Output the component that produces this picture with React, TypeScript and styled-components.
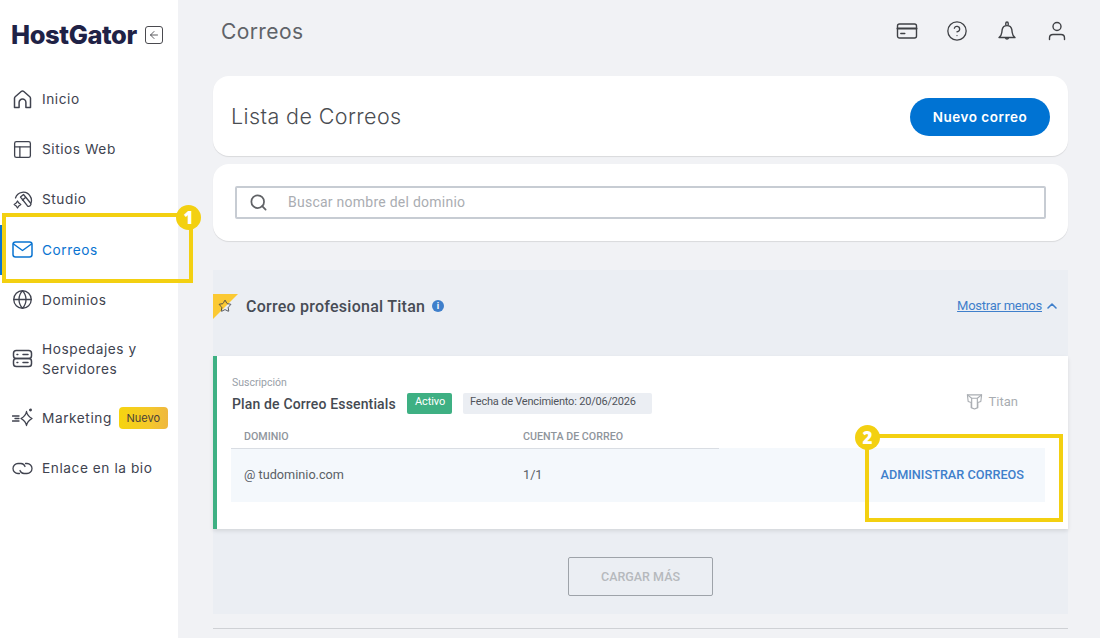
import React from 'react';
import styled, { createGlobalStyle } from 'styled-components';
import { ArrowLeft, ChevronUp, CircleHelp, Globe, PanelsTopLeft, Search, Star } from 'lucide-react';

const GlobalStyle = createGlobalStyle`
  html, body {
    margin: 0;
    padding: 0;
    background: #f1f2f5;
  }
  * {
    box-sizing: border-box;
  }
`;

const Page = styled.div`
  position: relative;
  display: flex;
  width: 1100px;
  height: 638px;
  overflow: hidden;
  background: #f1f2f5;
  font-family: Roboto, "Liberation Sans", sans-serif;
`;

const Sidebar = styled.aside`
  flex: 0 0 178px;
  background: #fff;
  padding: 21px 0 0;
`;

const LogoRow = styled.div`
  display: flex;
  align-items: center;
  height: 26px;
  padding-left: 11px;
  margin-bottom: 27px;
`;

const Logo = styled.span`
  font-family: Inter, sans-serif;
  font-size: 25.5px;
  font-weight: 800;
  letter-spacing: -0.4px;
  color: #1f2246;
`;

const CollapseBox = styled.span`
  display: flex;
  align-items: center;
  justify-content: center;
  width: 18px;
  height: 18px;
  margin: 1px 0 0 8px;
  border: 1.3px solid #4a4a4f;
  border-radius: 3px;
  color: #4a4a4f;
`;

const NavList = styled.nav`
  display: flex;
  flex-direction: column;
`;

const NavItem = styled.a<{ $active?: boolean; $h?: number }>`
  display: flex;
  align-items: center;
  gap: 9px;
  height: ${({ $h }) => $h ?? 50.2}px;
  padding-left: 12px;
  font-family: Inter, sans-serif;
  font-size: 13.7px;
  line-height: 20px;
  letter-spacing: 0.55px;
  color: ${({ $active }) => ($active ? '#0a74d1' : '#40434f')};
  box-shadow: ${({ $active }) => ($active ? 'inset 2px 0 0 #0a74d1' : 'none')};

  svg {
    flex: 0 0 21px;
    width: 21px;
    height: 21px;
  }
`;

const NewTag = styled.span`
  flex: 0 0 49px;
  height: 22px;
  margin-left: -2px;
  border-radius: 4px;
  background: linear-gradient(90deg, #f6d40f 0%, #f4c92a 60%, #efb73f 100%);
  font-size: 11px;
  line-height: 22px;
  letter-spacing: 0;
  text-align: center;
  color: #4a4038;
`;

const Main = styled.main`
  flex: 1;
  padding: 0 32px 0 35px;
`;

const TopBar = styled.header`
  display: flex;
  align-items: center;
  justify-content: space-between;
  height: 76px;
  padding: 0 0 14px 8px;
`;

const PageTitle = styled.h1`
  margin: 0;
  font-family: Inter, sans-serif;
  font-size: 21px;
  font-weight: 400;
  letter-spacing: 0.4px;
  color: #5f6368;
`;

const TopIcons = styled.div`
  display: flex;
  gap: 28px;
  color: #3f4145;

  svg {
    width: 22px;
    height: 22px;
    display: block;
  }
`;

const Card = styled.section<{ $h: number }>`
  display: flex;
  align-items: center;
  justify-content: space-between;
  height: ${({ $h }) => $h}px;
  margin-bottom: 8px;
  padding: 0 18px 0 18px;
  background: #fff;
  border-radius: 16px;
  box-shadow: 0 1px 1px rgba(0, 0, 0, 0.1);
`;

const CardTitle = styled.h2`
  margin: 0;
  font-family: Inter, sans-serif;
  font-size: 21.5px;
  font-weight: 300;
  letter-spacing: 0.4px;
  color: #4a4d52;
`;

const PrimaryButton = styled.button`
  width: 140px;
  height: 38px;
  margin-top: 2px;
  border: 0;
  border-radius: 19px;
  background: #0073d3;
  color: #fff;
  font-family: Inter, sans-serif;
  font-size: 13.5px;
  font-weight: 600;
  letter-spacing: 0.5px;
`;

const SearchBox = styled.label`
  display: flex;
  align-items: center;
  width: 811px;
  height: 33px;
  margin: 0 4px;
  padding: 0 0 1px 12px;
  border: 2px solid #c7ccd3;
  border-radius: 2px;
  color: #606266;
  font-size: 14px;
  letter-spacing: 0.25px;
  cursor: text;

  svg {
    width: 19px;
    height: 19px;
    margin-right: 20px;
  }
`;

const Placeholder = styled.span`
  color: #aaadb2;
`;

const Panel = styled.section`
  height: 344px;
  margin-top: 29px;
  background: #ebeef3;
`;

const PanelHead = styled.div`
  position: relative;
  display: flex;
  align-items: flex-start;
  justify-content: space-between;
  height: 86px;
  padding: 28px 8px 0 33px;
`;

const Ribbon = styled.span`
  position: absolute;
  top: 24px;
  left: 0;
  width: 25px;
  height: 25px;
  background: #fbc933;
  clip-path: polygon(0 0, 100% 0, 0 100%);
`;

const RibbonStar = styled.span`
  position: absolute;
  top: 29px;
  left: 5px;
  color: #3d4047;
  line-height: 0;
`;

const PanelTitle = styled.div`
  display: flex;
  align-items: center;
  gap: 7px;
  font-size: 16px;
  font-weight: 500;
  letter-spacing: 0.25px;
  line-height: 18px;
  color: #474c55;
`;

const InfoDot = styled.span`
  display: flex;
  align-items: center;
  justify-content: center;
  width: 12px;
  height: 12px;
  margin-top: -3px;
  border-radius: 50%;
  background: #3f7fcb;
  color: #fff;
  font-size: 9px;
  font-weight: 700;
`;

const ToggleLink = styled.a`
  display: flex;
  align-items: center;
  gap: 2px;
  font-size: 13px;
  letter-spacing: -0.25px;
  color: #3f7fcb;
  line-height: 16px;

  span {
    text-decoration: underline;
  }
`;

const SubCard = styled.article`
  height: 173px;
  padding: 20px 23px 0 15px;
  background: #fff;
  border-left: 4px solid #3eb083;
  box-shadow: 0 2px 4px rgba(0, 0, 0, 0.1);
`;

const SubLabel = styled.div`
  font-size: 10.5px;
  line-height: 13px;
  color: #98a0a8;
`;

const PlanRow = styled.div`
  display: flex;
  align-items: flex-start;
  margin-top: 4px;
  height: 21px;
`;

const PlanName = styled.div`
  width: 175px;
  font-size: 14px;
  font-weight: 500;
  letter-spacing: 0.15px;
  line-height: 22px;
  color: #454a52;
`;

const Tag = styled.span<{ $w: number; $green?: boolean }>`
  width: ${({ $w }) => $w}px;
  height: 21px;
  padding-left: ${({ $green }) => ($green ? 8 : 7)}px;
  border-radius: 2px;
  margin-right: 11px;
  font-size: 11px;
  letter-spacing: ${({ $green }) => ($green ? -0.1 : -0.2)}px;
  line-height: 17px;
  color: ${({ $green }) => ($green ? '#fff' : '#50545b')};
  background: ${({ $green }) => ($green ? '#3eb083' : '#ebeef3')};
`;

const Brand = styled.div`
  display: flex;
  align-items: center;
  gap: 6px;
  margin: -2px 0 0 auto;
  padding-right: 27px;
  font-size: 13px;
  line-height: 21px;
  color: #a9adb2;
`;

const HeadRow = styled.div`
  display: grid;
  grid-template-columns: 279px 209px;
  height: 22px;
  margin: 12px 0 0 -1px;
  font-size: 10.7px;
  font-weight: 500;
  line-height: 22px;
  color: #8f959c;

  span {
    padding-left: 13px;
    border-bottom: 1px solid #d9dde3;
  }
`;

const DataRow = styled.div`
  display: grid;
  grid-template-columns: 279px 1fr auto;
  align-items: center;
  height: 54px;
  margin-left: -1px;
  padding: 0 21px 1px 0;
  background: #f4f8fc;
  font-size: 12.7px;
  color: #5a5f66;

  span:not(:last-child) {
    padding-left: 13px;
  }
`;

const RowAction = styled.span`
  font-size: 12.7px;
  font-weight: 500;
  color: #3f7fcb;
`;

const MoreWrap = styled.div`
  display: flex;
  justify-content: center;
  padding-top: 28px;
`;

const MoreButton = styled.button`
  width: 145px;
  height: 39px;
  border: 1px solid #9ea3a9;
  border-radius: 2px;
  background: transparent;
  font-family: Roboto, sans-serif;
  font-size: 12.5px;
  font-weight: 500;
  color: #b6b9bd;
`;

const BottomRule = styled.hr`
  margin: 14px 0 0;
  border: 0;
  border-top: 1px solid #cfd1d5;
`;

const Callout = styled.div<{ $x: number; $y: number; $w: number; $h: number }>`
  position: absolute;
  left: ${({ $x }) => $x}px;
  top: ${({ $y }) => $y}px;
  width: ${({ $w }) => $w}px;
  height: ${({ $h }) => $h}px;
  border: 4px solid #f3d011;
  pointer-events: none;
`;

const CalloutNumber = styled.span<{ $right?: boolean }>`
  position: absolute;
  top: ${({ $right }) => ($right ? -12 : -13)}px;
  ${({ $right }) => ($right ? 'right: -12px;' : 'left: -14px;')}
  width: 25px;
  height: 25px;
  border-radius: 50%;
  background: #f3d011;
  color: #fff;
  font-family: "Open Sans", sans-serif;
  font-size: 17px;
  font-weight: 800;
  line-height: 25px;
  text-align: center;
`;

const stroke = {
  fill: 'none',
  stroke: 'currentColor',
  strokeWidth: 1.5,
  strokeLinecap: 'round' as const,
  strokeLinejoin: 'round' as const,
};

const HomeIcon = () => (
  <svg viewBox="0 0 21 21" {...stroke}>
    <path d="M2.5 18.5V9.2a2 2 0 0 1 .7-1.5l6-5.2a2 2 0 0 1 2.6 0l6 5.2a2 2 0 0 1 .7 1.5v9.3h-4.6v-5a3.4 3.4 0 0 0-6.8 0v5z" />
  </svg>
);

const StudioIcon = () => (
  <svg viewBox="0 0 21 21" {...stroke} strokeWidth={1.3}>
    <path d="M3.500 9a8 8 0 0 1 14.500-2 7.500 7.500 0 0 1 1 7" />
    <path d="M8.500 8l3-2.500 7 8.500a2.100 2.100 0 0 1-3.200 2.700z" />
    <path d="M10.500 11l3-2.400" />
    <path d="M5.500 12l1.300 2 2 1.500-2 1.500-1.300 2-1.300-2-2-1.500 2-1.500z" />
  </svg>
);

const MailIcon = () => (
  <svg viewBox="0 0 21 21" {...stroke}>
    <rect x="1" y="3" width="19" height="15" rx="2.500" />
    <path d="M1.500 5l9 6.500 9-6.500" />
  </svg>
);

const ServerIcon = () => (
  <svg viewBox="0 0 21 21" {...stroke}>
    <rect x="1.500" y="2.500" width="18" height="8" rx="2.800" />
    <rect x="1.500" y="10.500" width="18" height="8" rx="2.800" />
    <path d="M5 6.500h.8M5 14.500h.8M11 6.500h5M11 14.500h5" />
  </svg>
);

const MarketingIcon = () => (
  <svg viewBox="0 0 21 21" {...stroke} strokeWidth={1.3}>
    <path d="M14.500 4.500c.5 3 2 5 5.500 7-3.500 2-5 4-5.500 7-.5-3-2-5-5.500-7 3.500-2 5-4 5.500-7z" />
    <path d="M.5 9h6.500M3 11.500h4M.5 14h6.500" />
    <circle cx="18.500" cy="3" r=".8" fill="currentColor" />
  </svg>
);

const LinkIcon = () => (
  <svg viewBox="0 0 21 21" {...stroke} strokeWidth={1.3}>
    <path d="M7.500 15.500H6a5 5 0 0 1 0-10h3a4.500 4.500 0 0 1 4 3" />
    <path d="M13.500 5.500H15a5 5 0 0 1 0 10h-3a4.500 4.500 0 0 1-4-3" />
  </svg>
);

const CardIcon = () => (
  <svg viewBox="0 0 22 22" {...stroke} strokeWidth={1.4}>
    <rect x="1.500" y="4" width="19" height="14" rx="2" />
    <path d="M1.500 8.500h19" strokeWidth={2} />
    <path d="M4.800 13.500h4" />
  </svg>
);

const BellIcon = () => (
  <svg viewBox="0 0 22 22" {...stroke} strokeWidth={1.4}>
    <path d="M3 17.500c1.800-1.200 2.500-2.500 2.800-5l.4-3a4.900 4.900 0 0 1 9.600 0l.4 3c.3 2.500 1 3.800 2.800 5z" />
    <path d="M9.800 4.800V3.200a1.200 1.200 0 0 1 2.400 0v1.600" />
    <path d="M9.400 17.800a1.700 1.700 0 0 0 3.200 0" />
  </svg>
);

const UserIcon = () => (
  <svg viewBox="0 0 22 22" {...stroke} strokeWidth={1.4}>
    <circle cx="11" cy="6.500" r="4" />
    <path d="M3.500 19.500v-1.500c0-2 1.500-3.500 3.500-3.500h8c2 0 3.500 1.500 3.500 3.500v1.500" />
  </svg>
);

const TitanIcon = () => (
  <svg viewBox="0 0 18 18" width="17" height="17" {...stroke} strokeWidth={1.2}>
    <path d="M1.500 2h15l-.8 7-3.200 1v5.500L9 17l-3.500-1.500V10L2.300 9z" />
    <path d="M1.500 2L6 5.500h6L16.500 2M6 5.500V15M12 5.500V15" />
  </svg>
);

const App: React.FC = () => {
  return (
    <Page>
      <GlobalStyle />
      <Sidebar>
        <LogoRow>
          <Logo>HostGator</Logo>
          <CollapseBox>
            <ArrowLeft size={12} strokeWidth={1.8} />
          </CollapseBox>
        </LogoRow>
        <NavList>
          <NavItem><HomeIcon />Inicio</NavItem>
          <NavItem><PanelsTopLeft strokeWidth={1.5} />Sitios Web</NavItem>
          <NavItem><StudioIcon />Studio</NavItem>
          <NavItem $active><MailIcon />Correos</NavItem>
          <NavItem><Globe strokeWidth={1.5} />Dominios</NavItem>
          <NavItem $h={68}><ServerIcon /><span>Hospedajes y<br />Servidores</span></NavItem>
          <NavItem $h={50}><MarketingIcon />Marketing<NewTag>Nuevo</NewTag></NavItem>
          <NavItem><LinkIcon />Enlace en la bio</NavItem>
        </NavList>
      </Sidebar>
      <Main>
        <TopBar>
          <PageTitle>Correos</PageTitle>
          <TopIcons>
            <CardIcon />
            <CircleHelp strokeWidth={1.4} />
            <BellIcon />
            <UserIcon />
          </TopIcons>
        </TopBar>
        <Card $h={80}>
          <CardTitle>Lista de Correos</CardTitle>
          <PrimaryButton>Nuevo correo</PrimaryButton>
        </Card>
        <Card $h={77}>
          <SearchBox>
            <Search strokeWidth={2.2} />
            <Placeholder>Buscar nombre del dominio</Placeholder>
          </SearchBox>
        </Card>
        <Panel>
          <PanelHead>
            <Ribbon />
            <RibbonStar><Star size={14} strokeWidth={1.5} /></RibbonStar>
            <PanelTitle>Correo profesional Titan <InfoDot>i</InfoDot></PanelTitle>
            <ToggleLink>
              <span>Mostrar menos</span>
              <ChevronUp size={16} strokeWidth={2.4} />
            </ToggleLink>
          </PanelHead>
          <SubCard>
            <SubLabel>Suscripción</SubLabel>
            <PlanRow>
              <PlanName>Plan de Correo Essentials</PlanName>
              <Tag $w={45} $green>Activo</Tag>
              <Tag $w={189}>Fecha de Vencimiento: 20/06/2026</Tag>
              <Brand><TitanIcon />Titan</Brand>
            </PlanRow>
            <HeadRow>
              <span>DOMINIO</span>
              <span>CUENTA DE CORREO</span>
            </HeadRow>
            <DataRow>
              <span>@ tudominio.com</span>
              <span>1/1</span>
              <RowAction>ADMINISTRAR CORREOS</RowAction>
            </DataRow>
          </SubCard>
          <MoreWrap>
            <MoreButton>CARGAR MÁS</MoreButton>
          </MoreWrap>
        </Panel>
        <BottomRule />
      </Main>
      <Callout $x={2} $y={213} $w={191} $h={70}>
        <CalloutNumber $right>1</CalloutNumber>
      </Callout>
      <Callout $x={865} $y={434} $w={198} $h={88}>
        <CalloutNumber>2</CalloutNumber>
      </Callout>
    </Page>
  );
};

export default App;
